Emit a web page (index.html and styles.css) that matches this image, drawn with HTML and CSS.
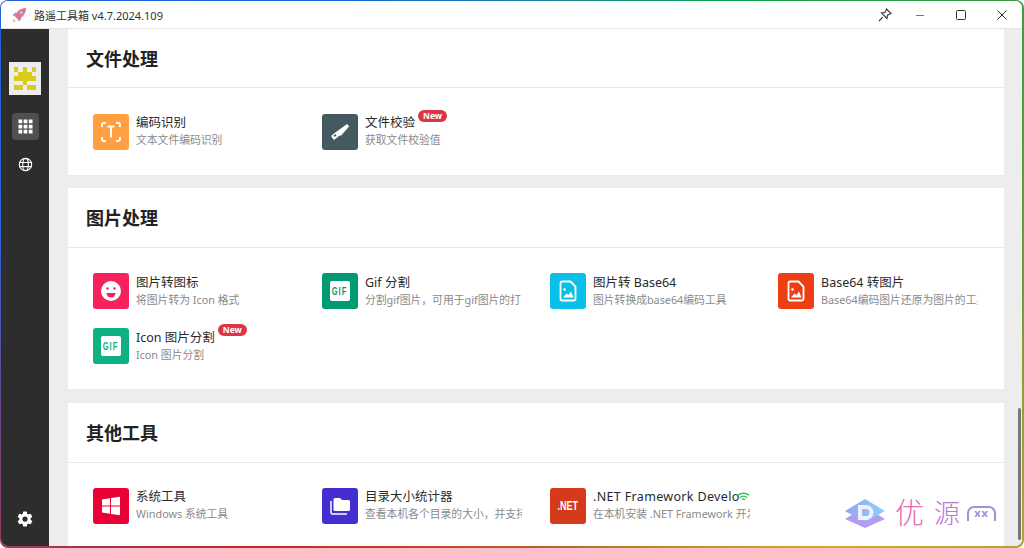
FILE: index.html
```html
<!DOCTYPE html>
<html lang="zh-CN">
<head>
  <meta charset="UTF-8" />
  <title>路遥工具箱</title>
  <link rel="stylesheet" href="styles.css">
</head>
<body>
  <div class="window">
    <div class="inner">
      <header class="titlebar">
        <svg class="app-icon" viewBox="0 0 16 16">
          <path d="M1.500 15.500l1-4 3 3z" fill="#ecd95a"/>
          <path d="M1.500 8l3-2.500 1.500 1-2 3zM8 14.500l2.500-3-1-1.500-3 2z" fill="#a98be0"/>
          <path d="M4 9.500C5 5 9 1 15 1c0 6-4 10-8.500 11z" fill="#e8708c"/>
          <circle cx="10.300" cy="5.700" r="1.700" fill="#8fd0f2"/>
        </svg>
        <span class="app-title">路遥工具箱 v4.7.2024.109</span>
        <div class="win-controls">
          <button class="win-btn win-pin">
            <svg viewBox="0 0 16 16" fill="none" stroke="#333" stroke-width="1.100"><path d="M9.500 2l4.500 4.500-1.200.5-2.300 1.200-.5 3.300-5.500-5.500 3.300-.5 1.200-2.300zM5.800 10.200l-3.800 3.800"/></svg>
          </button>
          <button class="win-btn">
            <svg viewBox="0 0 16 16" fill="none" stroke="#777" stroke-width="1"><path d="M4 8.500h8"/></svg>
          </button>
          <button class="win-btn">
            <svg viewBox="0 0 16 16" fill="none" stroke="#333" stroke-width="1"><rect x="3.500" y="3.500" width="9" height="9" rx="1"/></svg>
          </button>
          <button class="win-btn">
            <svg viewBox="0 0 16 16" fill="none" stroke="#333" stroke-width="1"><path d="M3.500 3.500l9 9M12.500 3.500l-9 9"/></svg>
          </button>
        </div>
      </header>

      <div class="body">
        <nav class="sidebar">
          <div class="avatar">
            <svg viewBox="0 0 5 5" preserveAspectRatio="none" shape-rendering="crispEdges" fill="#dccb1c">
              <path d="M0 0h1v1H0zM2 0h1v1H2zM4 0h1v1H4zM1 1h3v1H1zM0 2h5v1H0zM2 3h1v1H2zM0 4h2v1H0zM3 4h2v1H3z"/>
            </svg>
          </div>
          <a class="nav-btn active">
            <svg viewBox="0 0 16 16" fill="#fff"><path d="M.5.5h4v4h-4zM6 .5h4v4H6zM11.500.5h4v4h-4zM.5 6h4v4h-4zM6 6h4v4H6zM11.500 6h4v4h-4zM.5 11.500h4v4h-4zM6 11.500h4v4H6zM11.500 11.500h4v4h-4z"/></svg>
          </a>
          <a class="nav-btn">
            <svg viewBox="0 0 16 16" fill="none" stroke="#fff" stroke-width="1.200"><circle cx="8" cy="8" r="6.600"/><ellipse cx="8" cy="8" rx="3" ry="6.600"/><path d="M1.600 5.800h12.800M1.600 10.200h12.800"/></svg>
          </a>
          <a class="nav-btn settings">
            <svg viewBox="0 0 24 24" fill="#fff"><path d="M19.400 13c.04-.3.1-.7.1-1s-.03-.7-.1-1l2.100-1.600c.2-.15.25-.4.12-.64l-2-3.460c-.12-.22-.4-.3-.6-.22l-2.500 1c-.52-.4-1.080-.73-1.700-.98l-.37-2.650A.5.5 0 0 0 14 2h-4a.5.5 0 0 0-.5.42l-.37 2.650c-.62.25-1.180.6-1.700.98l-2.500-1c-.23-.1-.48 0-.6.22l-2 3.460c-.13.22-.07.49.12.64L4.570 11c-.04.3-.07.7-.07 1s.03.7.07 1l-2.110 1.650c-.19.15-.25.42-.12.64l2 3.460c.12.22.37.3.6.22l2.490-1c.52.4 1.080.73 1.700.98l.37 2.650c.04.24.25.42.5.42h4c.25 0 .46-.18.5-.42l.37-2.650c.62-.25 1.180-.6 1.700-.98l2.490 1c.23.1.48 0 .6-.22l2-3.460c.13-.22.07-.49-.12-.64zM12 15.500a3.500 3.500 0 1 1 0-7 3.500 3.500 0 0 1 0 7z"/></svg>
          </a>
        </nav>

        <main class="content">
          <section class="card card-first lift">
            <h2 class="card-head">文件处理</h2>
            <div class="tools tools-first">
              <div class="tool">
                <span class="ico ico-orange">
                  <svg viewBox="0 0 24 24" fill="none" stroke="#fff" stroke-width="1.900"><path d="M3 7V4.500A1.500 1.500 0 0 1 4.500 3H7M17 3h2.500A1.500 1.500 0 0 1 21 4.500V7M21 17v2.500a1.500 1.500 0 0 1-1.500 1.500H17M7 21H4.500A1.500 1.500 0 0 1 3 19.500V17M8.500 6.500h7M12 6.500v11"/></svg>
                </span>
                <div class="tool-text"><div class="tool-name">编码识别</div><div class="tool-desc">文本文件编码识别</div></div>
              </div>
              <div class="tool">
                <span class="ico ico-slate">
                  <svg viewBox="0 0 24 24" fill="#fff"><path fill-rule="evenodd" d="M3 16l5-4L19 4l2.500 2.500-1.300.3v1.400l-1.500.3v1.400l-1.500.3v1.400l-1.500.3v1.400l-1.500.3v1.400L11 16l-5 4zM5.500 15.500l2-1.500 1 1.500-2 1.500z"/></svg>
                </span>
                <div class="tool-text"><div class="tool-name">文件校验<span class="badge">New</span></div><div class="tool-desc">获取文件校验值</div></div>
              </div>
            </div>
          </section>

          <section class="card">
            <h2 class="card-head">图片处理</h2>
            <div class="tools">
              <div class="tool">
                <span class="ico ico-pink">
                  <svg viewBox="0 0 24 24"><circle cx="12" cy="12" r="10" fill="#fff"/><circle cx="8.500" cy="9.500" r="1.200" fill="#f5225c"/><circle cx="15.500" cy="9.500" r="1.200" fill="#f5225c"/><path d="M7.500 14h9a4.500 4.500 0 0 1-9 0z" fill="#f5225c"/></svg>
                </span>
                <div class="tool-text"><div class="tool-name">图片转图标</div><div class="tool-desc">将图片转为 Icon 格式</div></div>
              </div>
              <div class="tool">
                <span class="ico ico-green"><span class="gif-box"><span class="squeeze">GIF</span></span></span>
                <div class="tool-text"><div class="tool-name">Gif 分割</div><div class="tool-desc">分割gif图片，可用于gif图片的打</div></div>
              </div>
              <div class="tool">
                <span class="ico ico-cyan">
                  <svg viewBox="0 0 24 24"><path d="M6 2.500h8.500l5 5V20a1.500 1.500 0 0 1-1.500 1.500H6A1.500 1.500 0 0 1 4.500 20V4A1.500 1.500 0 0 1 6 2.500z" fill="none" stroke="#fff" stroke-width="1.800"/><circle cx="8.500" cy="10.500" r="1.300" fill="#fff"/><path d="M7 18.500l3.500-4 2 1.500 2.500-3.500 2.500 6z" fill="#fff"/></svg>
                </span>
                <div class="tool-text"><div class="tool-name">图片转 Base64</div><div class="tool-desc">图片转换成base64编码工具</div></div>
              </div>
              <div class="tool">
                <span class="ico ico-red">
                  <svg viewBox="0 0 24 24"><path d="M6 2.500h8.500l5 5V20a1.500 1.500 0 0 1-1.500 1.500H6A1.500 1.500 0 0 1 4.500 20V4A1.500 1.500 0 0 1 6 2.500z" fill="none" stroke="#fff" stroke-width="1.800"/><circle cx="8.500" cy="10.500" r="1.300" fill="#fff"/><path d="M7 18.500l3.500-4 2 1.500 2.500-3.500 2.500 6z" fill="#fff"/></svg>
                </span>
                <div class="tool-text"><div class="tool-name">Base64 转图片</div><div class="tool-desc">Base64编码图片还原为图片的工具</div></div>
              </div>
              <div class="tool">
                <span class="ico ico-teal"><span class="gif-box gif-teal"><span class="squeeze">GIF</span></span></span>
                <div class="tool-text"><div class="tool-name">Icon 图片分割<span class="badge">New</span></div><div class="tool-desc">Icon 图片分割</div></div>
              </div>
            </div>
          </section>

          <section class="card lift">
            <h2 class="card-head">其他工具</h2>
            <div class="tools">
              <div class="tool">
                <span class="ico ico-crimson">
                  <svg viewBox="0 0 24 24" fill="#fff"><path d="M3 5.500l8-1.200v7.200H3zM12 4.100l9-1.300v8.700h-9zM3 12.500h8v7.200l-8-1.200zM12 12.500h9v8.700l-9-1.300z"/></svg>
                </span>
                <div class="tool-text"><div class="tool-name">系统工具</div><div class="tool-desc">Windows 系统工具</div></div>
              </div>
              <div class="tool">
                <span class="ico ico-indigo">
                  <svg viewBox="0 0 24 24" fill="#fff"><path d="M7 4h5l2 2h6.500A1.500 1.500 0 0 1 22 7.500v8a1.500 1.500 0 0 1-1.500 1.500H7a1.500 1.500 0 0 1-1.500-1.500v-10A1.500 1.500 0 0 1 7 4z"/><path d="M3 7v11.500A1.500 1.500 0 0 0 4.500 20H19" fill="none" stroke="#fff" stroke-width="1.500"/></svg>
                </span>
                <div class="tool-text"><div class="tool-name">目录大小统计器</div><div class="tool-desc">查看本机各个目录的大小，并支持</div></div>
              </div>
              <div class="tool">
                <span class="ico ico-net"><span class="squeeze">.NET</span></span>
                <div class="tool-text"><div class="tool-name name-net">.NET Framework Develo</div><div class="tool-desc">在本机安装 .NET Framework 开发</div></div>
                <svg class="wifi" viewBox="0 0 16 12" fill="none" stroke="#2fc05a" stroke-width="1.600"><path d="M1 4c4-3.500 10-3.500 14 0M3.500 6.800c2.700-2.300 6.300-2.300 9 0M6 9.300c1.200-1 2.800-1 4 0"/></svg>
              </div>
            </div>
          </section>
        </main>
      </div>

      <div class="scrollthumb"></div>
      <div class="watermark">
        <svg class="wm-logo" viewBox="0 0 40 29">
          <defs>
            <linearGradient id="wmg" x1="0" y1="0" x2="1" y2="0"><stop offset="0" stop-color="#8fa8f5"/><stop offset="1" stop-color="#8fd0fa"/></linearGradient>
          </defs>
          <path d="M20 8l20 12-20 9L0 20z" fill="#b39af2"/>
          <path d="M20 0l20 12-20 11L0 12z" fill="url(#wmg)"/>
          <path d="M13 6h8a7.500 7.500 0 0 1 0 15h-8zM17 10v7h4a3.500 3.500 0 0 0 0-7z" fill="#f3f0ff"/>
        </svg>
        <span class="wm-you">优</span>
        <span class="wm-yuan">源</span>
        <span class="wm-net">xx</span>
      </div>
    </div>
  </div>
</body>
</html>
```

FILE: styles.css
```css
* {
  box-sizing: border-box;
}

html, body {
  margin: 0;
  height: 100%;
  overflow: hidden;
}

body {
  background: #fff;
  font-family: "Noto Sans", "Noto Sans CJK SC", sans-serif;
}

.window {
  height: 548px;
  padding: 1px 2px 2px 1px;
  border-radius: 8px;
  background: conic-gradient(from 0deg, #1a7fb0 0deg, #12a04a 40deg, #6c9a3a 90deg, #d4a72c 130deg, #b5652c 170deg, #c8281e 225deg, #2c62d8 275deg, #1763d8 320deg, #1a7fb0 360deg);
}

.inner {
  position: relative;
  height: 100%;
  display: flex;
  flex-direction: column;
  background: #fff;
  border-radius: 7px;
  overflow: hidden;
}

.titlebar {
  height: 28px;
  flex: none;
  display: flex;
  align-items: center;
  padding-left: 10px;
  background: #fff;
  border-bottom: 1px solid #e5e5e5;
}

.app-icon {
  width: 16px;
  height: 16px;
  margin-right: 7px;
}

.app-title {
  font-size: 11px;
  color: #333;
}

.win-controls {
  margin-left: auto;
  display: flex;
}

.win-btn {
  width: 41px;
  height: 27px;
  padding: 0;
  border: none;
  background: none;
  display: flex;
  align-items: center;
  justify-content: center;
}

.win-pin {
  width: 28px;
}

.win-btn svg {
  width: 16px;
  height: 16px;
}

.body {
  flex: 1;
  min-height: 0;
  display: flex;
}

.sidebar {
  width: 48px;
  flex: none;
  display: flex;
  flex-direction: column;
  align-items: center;
  padding-top: 33px;
  background: #2d2d2d;
}

.avatar {
  width: 32px;
  height: 33px;
  padding: 5px;
  background: #ededed;
  margin-bottom: 18px;
}

.avatar svg {
  display: block;
  width: 100%;
  height: 100%;
}

.nav-btn {
  width: 27px;
  height: 27px;
  margin-bottom: 11px;
  border-radius: 4px;
  display: flex;
  align-items: center;
  justify-content: center;
}

.nav-btn svg {
  width: 15px;
  height: 15px;
}

.nav-btn.active {
  background: #505050;
}

.settings {
  margin-top: auto;
  margin-bottom: 14px;
}

.settings svg {
  width: 18px;
  height: 18px;
}

.content {
  flex: 1;
  min-width: 0;
  overflow: hidden;
  padding: 0 18px 0 19px;
  background: #ededed;
}

.card {
  background: #fff;
  margin-bottom: 14px;
}

.card-first {
  margin-bottom: 13px;
}

.card-head {
  margin: 0;
  height: 60px;
  padding-left: 18px;
  padding-bottom: 2px;
  display: flex;
  align-items: center;
  font-size: 18px;
  font-weight: 700;
  color: #222;
  border-bottom: 1px solid #e8e8e8;
}

.card-first .card-head {
  height: 59px;
  padding-bottom: 1px;
}

.tools {
  display: grid;
  grid-template-columns: 229px 228px 228px 228px;
  row-gap: 19px;
  padding: 25px 0 25px 25px;
}

.tools-first {
  padding: 26px 0 25px 25px;
}

.tool {
  position: relative;
  width: 200px;
  display: flex;
  align-items: center;
  gap: 7px;
}

.ico {
  width: 36px;
  height: 36px;
  flex: none;
  border-radius: 3px;
  display: flex;
  align-items: center;
  justify-content: center;
}

.ico svg {
  width: 24px;
  height: 24px;
}

.ico-orange { background: #ff9f40; }
.ico-slate { background: #455a60; }
.ico-pink { background: #f5225c; }
.ico-green { background: #029a74; }
.ico-teal { background: #0fb083; }
.ico-cyan { background: #0ac0e8; }
.ico-red { background: #ee3e14; }
.ico-crimson { background: #e90035; }
.ico-indigo { background: #442ed2; }

.ico-net {
  background: #d53a1a;
  color: #fff;
  font-family: "Liberation Sans", sans-serif;
  font-size: 12px;
  font-weight: 700;
}

.squeeze {
  display: inline-block;
  transform: scaleX(.75);
}

.gif-box {
  width: 20px;
  height: 20px;
  border-radius: 2px;
  background: #fff;
  color: #029a74;
  font-family: "Liberation Sans", sans-serif;
  font-size: 10px;
  font-weight: 700;
  letter-spacing: 1.500px;
  display: flex;
  align-items: center;
  justify-content: center;
}

.gif-teal {
  color: #0fb083;
}

.tool-text {
  flex: 1;
  min-width: 0;
}

.lift .tool-text {
  margin-bottom: 2px;
}

.tool-name {
  position: relative;
  font-size: 12.500px;
  line-height: 18px;
  color: #2a2a2a;
  white-space: nowrap;
}

.name-net {
  letter-spacing: .34px;
}

.tool-desc {
  font-size: 10.800px;
  line-height: 16px;
  color: #8a8a8a;
  white-space: nowrap;
  overflow: hidden;
}

.badge {
  position: absolute;
  top: -5px;
  margin-left: 3px;
  height: 12px;
  padding: 0 5px;
  border-radius: 6px;
  background: #dc3545;
  color: #fff;
  font-size: 8.500px;
  font-weight: 700;
  line-height: 12px;
}

.lift .badge {
  top: -4px;
}

.wifi {
  position: absolute;
  right: 0;
  top: 4px;
  width: 13px;
  height: 10px;
}

.scrollthumb {
  position: absolute;
  right: 1px;
  top: 407px;
  width: 3px;
  height: 132px;
  border-radius: 2px;
  background: #77777a;
}

.watermark {
  position: absolute;
  left: 844px;
  top: 496px;
  display: flex;
  align-items: center;
}

.wm-logo {
  width: 40px;
  height: 29px;
  margin-right: 10px;
}

.wm-you {
  font-size: 29px;
  font-weight: 300;
  line-height: 32px;
  color: #e46cb0;
  margin-right: 10px;
}

.wm-yuan {
  font-size: 26px;
  font-weight: 300;
  line-height: 32px;
  color: #b878d0;
  margin-right: 7px;
}

.wm-net {
  width: 29px;
  height: 15px;
  border: 2px solid #a58ed8;
  border-bottom: none;
  border-radius: 7px 7px 0 0;
  font-size: 11px;
  font-weight: 700;
  line-height: 10px;
  letter-spacing: 1px;
  text-align: center;
  color: #a58ed8;
}
```
